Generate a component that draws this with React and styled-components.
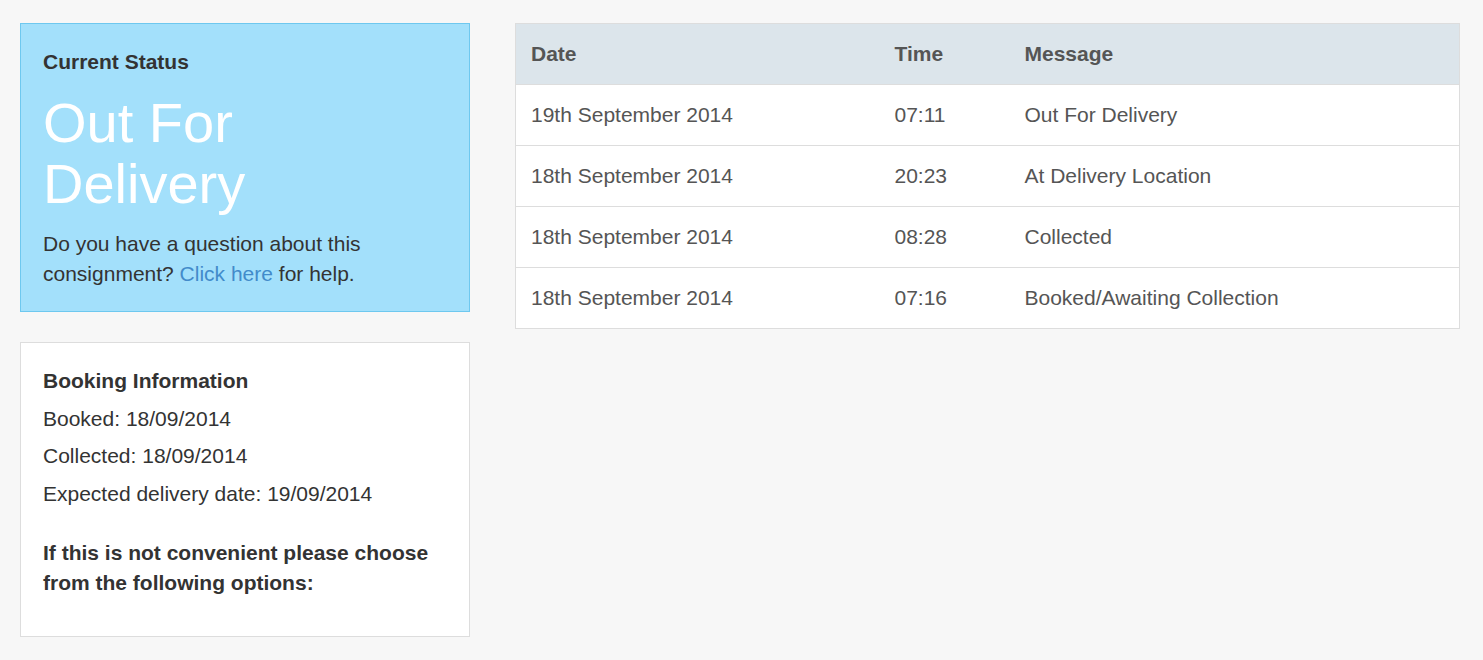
import React from "react";
import styled, { createGlobalStyle } from "styled-components";

const Global = createGlobalStyle`
  html, body { margin: 0; padding: 0; background: #f7f7f7; }
  body { font-family: "Liberation Sans", Arial, sans-serif; color: #333; }
  * { box-sizing: border-box; }
`;

const Page = styled.div`
  display: flex;
  align-items: flex-start;
  gap: 45px;
  padding: 23px 23px 23px 20px;
`;

const Side = styled.div`
  width: 450px;
  flex: none;
  display: flex;
  flex-direction: column;
  gap: 30px;
`;

const Panel = styled.div`
  background: ${(p) => (p.$tone === "info" ? "#a3e0fb" : "#fff")};
  border: 1px solid ${(p) => (p.$tone === "info" ? "#6ec8ef" : "#dddddd")};
  padding: ${(p) => (p.$tone === "info" ? "23px 22px 22px" : "23px 22px 38px")};
`;

const Label = styled.div`
  font-size: 21px;
  font-weight: bold;
  line-height: 30px;
  color: #333;
  margin-top: ${(p) => (p.$spaced ? "29.5px" : "0")};
`;

const Big = styled.div`
  font-size: 56px;
  line-height: 61px;
  color: #fff;
  margin: 15px 0 15px;
`;

const Text = styled.p`
  margin: 0;
  font-size: 21px;
  line-height: 30px;
  color: #333;
`;

const Info = styled.div`
  font-size: 21px;
  line-height: 30px;
  margin-top: 7.5px;
  color: #333;
`;

const Link = styled.a`
  color: #428bca;
  text-decoration: none;
`;

const Table = styled.table`
  flex: 1;
  border-collapse: collapse;
  background: #fff;
  border: 1px solid #dddddd;
  font-size: 21px;
  color: #555;
`;

const Th = styled.th`
  text-align: left;
  font-weight: bold;
  background: #dce5eb;
  height: 61px;
  padding: 0 15px;
  width: ${(p) => p.$w || "auto"};
`;

const Td = styled.td`
  height: 61px;
  padding: 0 15px;
  border-top: 1px solid #dddddd;
`;

const rows = [
  ["19th September 2014", "07:11", "Out For Delivery"],
  ["18th September 2014", "20:23", "At Delivery Location"],
  ["18th September 2014", "08:28", "Collected"],
  ["18th September 2014", "07:16", "Booked/Awaiting Collection"],
];

export default function App() {
  return (
    <>
      <Global />
      <Page>
        <Side>
          <Panel $tone="info">
            <Label>Current Status</Label>
            <Big>Out For<br />Delivery</Big>
            <Text>
              Do you have a question about this consignment? <Link href="#">Click here</Link> for help.
            </Text>
          </Panel>
          <Panel>
            <Label>Booking Information</Label>
            <Info>Booked: 18/09/2014</Info>
            <Info>Collected: 18/09/2014</Info>
            <Info>Expected delivery date: 19/09/2014</Info>
            <Label $spaced>If this is not convenient please choose from the following options:</Label>
          </Panel>
        </Side>
        <Table>
          <thead>
            <tr>
              <Th $w="364px">Date</Th>
              <Th $w="130px">Time</Th>
              <Th>Message</Th>
            </tr>
          </thead>
          <tbody>
            {rows.map((r, i) => (
              <tr key={i}>
                {r.map((c, j) => (
                  <Td key={j}>{c}</Td>
                ))}
              </tr>
            ))}
          </tbody>
        </Table>
      </Page>
    </>
  );
}
